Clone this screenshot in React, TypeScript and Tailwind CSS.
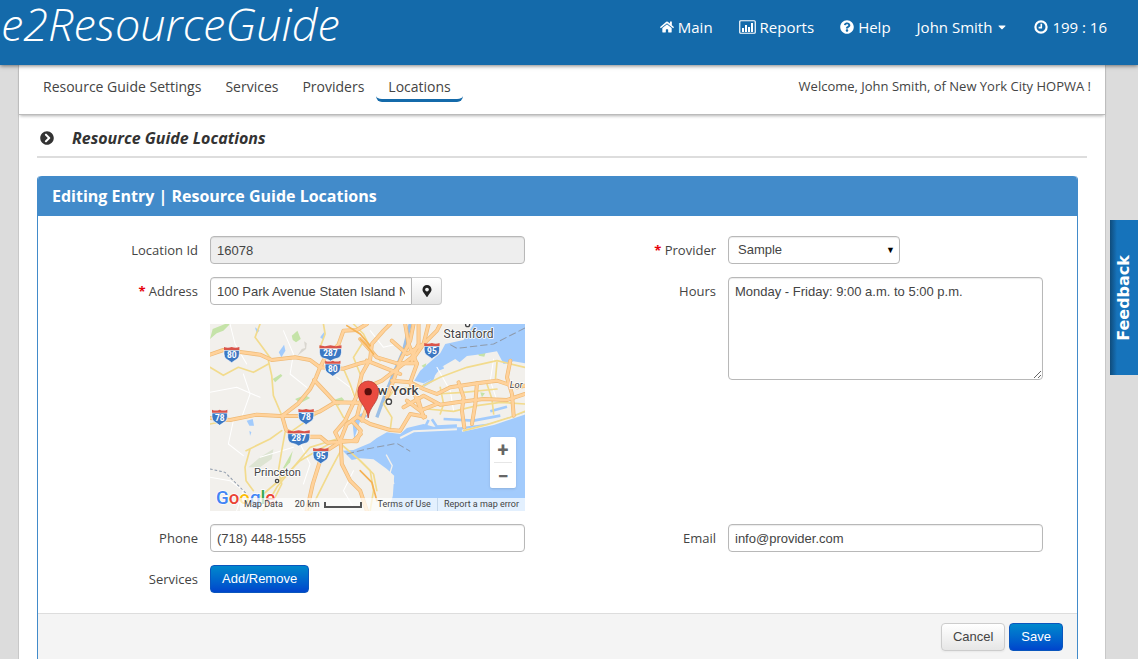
import { useState } from 'react';
import type { ReactNode } from 'react';
import { FaHome, FaQuestionCircle, FaChevronCircleRight, FaMapMarkerAlt, FaCaretDown } from 'react-icons/fa';

const TABS = ['Resource Guide Settings', 'Services', 'Providers', 'Locations'];

const INPUT =
  'block w-full h-7 rounded border border-[#b8b8b8] bg-white px-1.5 font-["Liberation_Sans",Arial,sans-serif] text-[13px] text-[#444] shadow-[inset_0_1px_1px_rgba(0,0,0,0.08)]';
const BTN = 'h-7 rounded border px-[11px] font-["Liberation_Sans",Arial,sans-serif] text-[13px]';
const BTN_BLUE = `${BTN} border-[#0a56bd] bg-linear-to-b from-[#0088cc] to-[#0044cc] text-white`;
const BTN_LIGHT = `${BTN} border-[#ccc] bg-linear-to-b from-white to-[#e6e6e6] text-[#444] shadow-xs`;

// Map geometry, in a 944x561 space
const HIGHWAYS = [
  'M0 92 L40 78 L90 84 L150 92 L185 108 L255 100 L300 108 L330 130 L400 134 L450 118 L480 112',
  'M0 282 L60 288 L140 272 L210 276 L290 276 L330 262 L375 235 L440 236 L475 236',
  'M216 276 L265 238 L300 195 L318 160 L330 130 L345 100 L385 62 L400 20 L440 18 L470 0',
  'M216 276 L228 318 L262 338 L330 338 L352 356 L390 354 L430 350 L452 330',
  'M312 168 L350 208 L375 235 M390 354 L375 325 L405 290 L440 215 L455 150 L480 105 L485 60 L520 20 L540 0',
  'M390 354 L350 380 L330 410 L308 480 L290 560',
  'M388 356 L410 300 L440 280 L450 240 L470 190 L515 170 L560 135 L605 100 L625 60 L625 0',
  'M388 350 L440 352 L452 320 L425 290 L440 278 L480 300 L540 318 L570 320 L600 270 L645 278',
  'M392 360 L395 420 L420 470 L450 500 L470 560',
  'M545 170 L600 175 L640 195 L680 210 L720 190 L800 178 L860 170 L920 190 L944 185',
  'M580 250 L640 215 L690 242 L740 235 L820 225 L890 228 L944 210',
  'M745 175 L760 220 L755 260 L762 310 M800 178 L795 240 L785 300 M900 110 L890 160 L905 210 L910 275',
  'M585 0 L595 60 L620 120 L600 175 L640 280 M545 50 L590 90 L640 60 L680 20 L690 0',
  'M450 45 L500 100 L560 118 L620 118',
  'M470 110 L520 130 L570 150 M610 0 L600 50 L570 110 L550 170 L530 220 M655 0 L640 60 L605 110',
  'M600 175 L625 230 L640 280 M590 230 L630 260 L680 240 M475 236 L455 290',
];

const ROADS = [
  'M0 130 L40 154 L85 130 L130 145 L175 120',
  'M175 110 L185 155 L190 215 L216 276',
  'M150 0 L135 40 L165 80 L185 108',
  'M0 300 L60 288 M120 375 L105 430 L108 470 L130 500 M108 380 L180 345 L215 320',
  'M225 325 L215 380 L205 440 L215 480 L190 530',
  'M375 350 L330 375 L270 410 L230 450 L160 510 L110 550',
  'M380 345 L300 370 L250 430 L200 490 L160 560',
  'M350 250 L290 290 L240 325',
  'M392 360 L450 410 L490 450 L500 500',
  'M630 190 L690 160 L770 130 L860 110 L944 130',
  'M650 255 L730 262 L800 245 L870 235 L944 240',
  'M760 320 L830 302 L900 280 L944 262',
  'M430 0 L460 30 L480 70 L510 110',
  'M540 318 L545 280 L520 240 L550 200 L600 190',
  'M340 0 L345 30 L330 70 L345 100',
  'M300 560 L330 500 L360 440 L392 380',
  'M450 410 L480 440 L490 500 L480 560',
  'M400 134 L420 180 L440 236 M375 235 L400 280 L430 300 M455 60 L430 100 L450 150',
  'M690 190 L700 240 L690 270 M830 180 L845 225 L850 270 M860 115 L855 170 M680 210 L760 205 L860 195',
];

const LANES = [
  'M0 205 L80 190 L150 220 M60 0 L75 60 L110 120 M260 340 L300 420 L280 480 M150 400 L250 370',
  'M0 460 L60 470 L100 500 L80 560 M70 290 L55 360 L100 395 M430 440 L400 500 L430 550',
  'M100 150 L120 210 L95 280 M220 20 L250 90 L240 150 L290 190 M380 160 L420 190 L440 240',
  'M680 130 L720 200 L730 260 M850 105 L840 170 L860 230 M480 20 L520 70 L560 60',
];

const PARKS = [
  'M0 45 L8 15 L45 0 L60 0 L40 20 L20 28Z',
  'M245 35 L262 20 L272 45 L258 55 L248 48Z',
  'M188 165 L212 150 L217 155 L195 175Z',
  'M255 225 L285 213 L300 222 L270 238Z',
  'M370 228 L395 220 L402 228 L385 245Z',
  'M220 430 L248 380 L240 415 L222 435Z',
  'M340 85 L352 75 L360 100 L348 105Z',
  'M800 82 L828 80 L822 98 L806 95Z',
  'M810 205 L824 208 L815 220Z',
  'M634 125 L648 118 L645 136Z',
];

const LAKES = [
  'M206 85 L222 62 L226 80 L214 100Z',
  'M110 290 L128 285 L132 305 L118 305Z',
  'M118 320 L124 325 L120 335Z',
  'M135 10 L148 20 L140 28Z',
  'M330 40 L345 20 L340 48Z',
  'M426 285 L455 268 L475 275 L450 290 L440 320 L432 345Z',
];

const SHIELDS = [
  { x: 65, y: 91, n: '80' },
  { x: 361, y: 86, n: '287' },
  { x: 368, y: 132, n: '80' },
  { x: 29, y: 279, n: '78' },
  { x: 288, y: 277, n: '78' },
  { x: 266, y: 341, n: '287' },
  { x: 332, y: 394, n: '95' },
  { x: 665, y: 79, n: '95' },
];

function Shield({ x, y, n }: { x: number; y: number; n: string }) {
  const w = n.length > 2 ? 33 : 23;
  return (
    <g transform={`translate(${x} ${y})`}>
      <path
        d={`M${-w} -12 H${w} Q${w + 2} 12 ${w - 10} 16 Q8 19 0 25 Q-8 19 ${-w + 10} 16 Q${-w - 2} 12 ${-w} -12Z`}
        fill="#3c78c3"
        stroke="#fff"
        strokeWidth="2"
      />
      <path d={`M${-w} -13 V-22 Q${-w / 2} -17 0 -22 Q${w / 2} -17 ${w} -22 V-13Z`} fill="#d9534a" />
      <text y="11" textAnchor="middle" fontSize="25" fontWeight="700" fill="#fff">{n}</text>
    </g>
  );
}

function RegionMap() {
  return (
    <svg viewBox="0 0 944 561" preserveAspectRatio="none" className="block h-full w-full font-[Roboto,sans-serif]" role="img" aria-label="Map of the location">
      <rect width="944" height="561" fill="#f2f0ec" />
      <path d="M262 95 L275 75 L285 72 L282 52 L290 58 L288 75Z" fill="#d9d6cf" />
      <path d="M115 430 L150 400 L190 375 L185 405 L150 430Z" fill="#dde4d2" />
      <g fill="#c5e3a8">{PARKS.map(d => <path key={d} d={d} />)}</g>

      {/* Water */}
      <g fill="#a2cbfc">
        <path d="M398 380 L430 378 L480 357 L500 342 L530 325 L570 330 L590 312 L640 300 L670 308 L750 310 L840 298 L910 275 L944 262 V561 H535 L548 515 L552 455 L530 435 L490 406 L450 403 L425 408Z" />
        <path d="M790 0 H944 V118 L910 112 L880 120 L860 82 L800 92 L770 96 L748 115 L735 105 L695 128 L665 165 L640 178 L612 170 L630 140 L650 122 L690 88 L705 60 L760 48Z" />
        {LAKES.map(d => <path key={d} d={d} />)}
      </g>
      <path d="M600 0 L580 80 L550 150 L520 225 L500 280" fill="none" stroke="#9cbfe6" strokeWidth="10" />
      <path d="M700 130 L675 140 L665 170 L640 185" fill="none" stroke="#a2cbfc" strokeWidth="8" />
      <path d="M575 342 L640 318 L655 288 M665 286 L680 308 L740 305 M700 285 L790 290 L870 275 M840 262 L890 248" fill="none" stroke="#a2cbfc" strokeWidth="8" />
      <path d="M570 342 L610 322 L740 316 M755 320 L850 300 L944 268" fill="none" stroke="#f2f0ec" strokeWidth="6" />
      <path d="M528 392 L546 425 L540 445 L551 480" fill="none" stroke="#f2f0ec" strokeWidth="4" />

      {/* Roads */}
      <g fill="none" strokeLinejoin="round" strokeLinecap="round">
        <g stroke="#fff" strokeWidth="3">{LANES.map(d => <path key={d} d={d} />)}</g>
        <g stroke="#f2db8d" strokeWidth="5">{ROADS.map(d => <path key={d} d={d} />)}</g>
        <g stroke="#efb974" strokeWidth="12">{HIGHWAYS.map(d => <path key={d} d={d} />)}</g>
        <g stroke="#ffd29b" strokeWidth="8">{HIGHWAYS.map(d => <path key={d} d={d} />)}</g>
        <path d="M450 45 L470 65 L490 90 M410 5 L450 30 L480 65 M450 440 L485 475 L500 530" stroke="#f5b356" strokeWidth="5" />
      </g>
      <g fill="none" stroke="#8e9aab" strokeWidth="3" strokeDasharray="22 9">
        <path d="M720 62 L740 73 L850 60 L944 12" />
        <path d="M410 390 L470 375 L560 358 L600 382" />
        <path d="M0 435 L45 445 L90 490 L120 520" strokeDasharray="8 6" />
      </g>

      {SHIELDS.map(s => <Shield key={`${s.x}-${s.y}`} {...s} />)}

      {/* Places */}
      <g fill="#444" stroke="#fff" strokeWidth="5" paintOrder="stroke" strokeLinejoin="round">
        <text x="132" y="457" fontSize="33">Princeton</text>
        <text x="700" y="43" fontSize="36">Stamford</text>
        <text x="502" y="213" fontSize="41" fontWeight="500">w York</text>
        <text x="898" y="193" fontSize="28" fontStyle="italic">Lor</text>
      </g>
      <g fill="#fff" stroke="#444" strokeWidth="4">
        <circle cx="201" cy="471" r="5" />
        <circle cx="536" cy="233" r="8" />
        <circle cx="772" cy="2" r="6" />
      </g>

      {/* Pin */}
      <path d="M474 282 C470 245 443 238 443 202 A31 31 0 0 1 505 202 C505 238 478 245 474 282Z" fill="#ea4b40" stroke="#a8332b" strokeWidth="2" />
      <circle cx="474" cy="203" r="11" fill="#5a0f0c" />

      <text x="18" y="541" fontSize="56" fontWeight="500" stroke="#fff" strokeWidth="4" paintOrder="stroke">
        <tspan fill="#4285f4">G</tspan>
        <tspan fill="#ea4335">o</tspan>
        <tspan fill="#fbbc05">o</tspan>
        <tspan fill="#4285f4">g</tspan>
        <tspan fill="#34a853">l</tspan>
        <tspan fill="#ea4335">e</tspan>
      </text>
    </svg>
  );
}

function ReportsIcon() {
  return (
    <svg viewBox="0 0 17 14" className="h-3.5 w-[17px]" aria-hidden="true">
      <rect x="0.75" y="0.75" width="15.5" height="12.5" rx="1" fill="none" stroke="currentColor" strokeWidth="1.2" />
      <path d="M3 8h2v4H3zM6 5h2v7H6zM9 7h2v5H9zM12 3h2v9h-2z" fill="currentColor" />
    </svg>
  );
}

function ClockIcon() {
  return (
    <svg viewBox="0 0 14 14" className="h-3.5 w-3.5" aria-hidden="true" fill="none" stroke="currentColor">
      <circle cx="7" cy="7" r="5.6" strokeWidth="2.2" />
      <path d="M7.3 3.8v3.8H4.6" strokeWidth="1.6" />
    </svg>
  );
}

function Field({ id, label, required, children }: { id: string; label: string; required?: boolean; children: ReactNode }) {
  return (
    <div className="flex items-start gap-3 pr-[31px]">
      <label htmlFor={id} className="w-40 shrink-0 text-right leading-7">
        {required && <span className="font-bold text-red-600">* </span>}
        {label}
      </label>
      <div className="min-w-0 flex-1">{children}</div>
    </div>
  );
}

export default function App() {
  const [tab, setTab] = useState('Locations');
  const [address, setAddress] = useState('100 Park Avenue Staten Island NY 10301');

  return (
    <div className="relative flex min-h-screen flex-col bg-[#dcdcdc] font-['Open_Sans',sans-serif] text-[13px] text-[#444]">
      <header className="relative z-10 flex h-[65px] items-start justify-between bg-[#146aaa] pr-[31px] pl-px text-white shadow-[0_1px_4px_rgba(0,0,0,0.5)]">
        <h1 className="text-[45px] leading-12 font-[350] italic">e2ResourceGuide</h1>
        <nav className="flex h-[54px] items-center gap-[26px] text-[15px]">
          <a href="#main" className="flex items-center gap-1"><FaHome className="h-3.5 w-3.5" />Main</a>
          <a href="#reports" className="flex items-center gap-1"><ReportsIcon />Reports</a>
          <a href="#help" className="flex items-center gap-1"><FaQuestionCircle className="h-3.5 w-3.5" />Help</a>
          <button type="button" className="flex items-center gap-1">John Smith <FaCaretDown className="h-3 w-3" /></button>
          <span className="flex items-center gap-1"><ClockIcon />199 : 16</span>
        </nav>
      </header>

      <main className="mr-8 ml-[18px] flex flex-1 flex-col border-x border-[#c8c8c8] bg-white">
        <div className="flex h-[50px] items-start justify-between border-b border-[#bbb] pr-3.5 pl-3 shadow-[0_2px_3px_-1px_rgba(0,0,0,0.3)]">
          <nav className="flex">
            {TABS.map(t => (
              <button
                key={t}
                type="button"
                onClick={() => setTab(t)}
                className={`h-[37px] rounded-md border-b-3 px-3 pt-2 text-[14px] ${t === tab ? 'border-[#146aaa]' : 'border-transparent'}`}
              >
                {t}
              </button>
            ))}
          </nav>
          <p className="leading-[42px]">Welcome, John Smith, of New York City HOPWA !</p>
        </div>

        <div className="mr-[18px] ml-[18px] flex h-[43px] items-center gap-[18px] border-b-2 border-[#ddd] pt-1 pl-[3px] text-[#333]">
          <FaChevronCircleRight className="h-3.5 w-3.5" />
          <h2 className="text-base font-bold italic">Resource Guide Locations</h2>
        </div>

        <form className="mt-[18px] mr-[27px] ml-[18px] flex flex-1 flex-col rounded-t border-x border-[#428bca]" onSubmit={e => e.preventDefault()}>
          <h3 className="h-10 rounded-t-sm bg-[#428bca] px-3.5 text-base leading-10 font-bold text-white">
            Editing Entry | Resource Guide Locations
          </h3>

          <div className="grid grid-cols-2 gap-y-[13px] pt-5 pr-[3px] pb-5">
            <Field id="locationId" label="Location Id">
              <input id="locationId" className={`${INPUT} bg-[#eee]!`} value="16078" readOnly />
            </Field>
            <Field id="provider" label="Provider" required>
              <div className="relative w-[172px]">
                <select id="provider" className={`${INPUT} appearance-none pl-[9px]!`}>
                  <option>Sample</option>
                </select>
                <span className="pointer-events-none absolute top-0 right-[5px] text-[9px] leading-7 text-black">▼</span>
              </div>
            </Field>

            <Field id="address" label="Address" required>
              <div className="flex w-[232px]">
                <input id="address" className={`${INPUT} rounded-r-none`} value={address} onChange={e => setAddress(e.target.value)} />
                <button type="button" aria-label="Find on map" className="flex h-7 w-[30px] shrink-0 items-center justify-center rounded-r border border-l-0 border-[#ccc] bg-linear-to-b from-white to-[#e6e6e6] text-[#222]">
                  <FaMapMarkerAlt className="h-3 w-3" />
                </button>
              </div>
              <div className="relative mt-[19px] h-[187px] overflow-hidden font-[Roboto,sans-serif] text-[9px] text-[#444]">
                <RegionMap />
                <div className="absolute right-[9px] bottom-[23px] flex w-[26px] flex-col items-center rounded-xs bg-white text-[20px] font-bold text-[#666] shadow">
                  <button type="button" aria-label="Zoom in" className="h-[25px] w-full leading-6">+</button>
                  <span className="h-px w-[18px] bg-[#e6e6e6]" />
                  <button type="button" aria-label="Zoom out" className="h-[25px] w-full leading-6">−</button>
                </div>
                <div className="absolute right-0 bottom-0 flex h-[13px] items-center bg-white/70 leading-[13px]">
                  <span className="px-1">Map Data</span>
                  <span className="flex items-center gap-1 pr-2.5 pl-2">
                    20 km
                    <span className="h-1.5 w-[38px] border-x-2 border-b-2 border-[#555]" />
                  </span>
                  <a href="#terms" className="border-r border-[#c3d6ea] px-1.5">Terms of Use</a>
                  <a href="#report" className="px-1.5">Report a map error</a>
                </div>
              </div>
            </Field>
            <Field id="hours" label="Hours">
              <textarea id="hours" className={`${INPUT} h-[103px]! resize py-1`} defaultValue="Monday - Friday: 9:00 a.m. to 5:00 p.m." />
            </Field>

            <Field id="phone" label="Phone">
              <input id="phone" type="tel" className={INPUT} defaultValue="(718) 448-1555" />
            </Field>
            <Field id="email" label="Email">
              <input id="email" type="email" className={INPUT} defaultValue="info@provider.com" />
            </Field>

            <Field id="services" label="Services">
              <button id="services" type="button" className={BTN_BLUE}>Add/Remove</button>
            </Field>
          </div>

          <div className="flex flex-1 items-start justify-end gap-1 border-t border-[#ddd] bg-[#f4f4f4] pt-[9px] pr-3.5 pb-2">
            <button type="button" className={BTN_LIGHT}>Cancel</button>
            <button type="submit" className={BTN_BLUE}>Save</button>
          </div>
        </form>
      </main>

      <button type="button" className="absolute top-[220px] right-0 flex h-[155px] w-7 items-center justify-center bg-linear-to-r from-[#0f4c7c] to-[#1673bb] to-25% font-['DejaVu_Sans',Verdana,sans-serif] text-base font-bold text-white">
        <span className="rotate-180 [writing-mode:vertical-rl]">Feedback</span>
      </button>
    </div>
  );
}
